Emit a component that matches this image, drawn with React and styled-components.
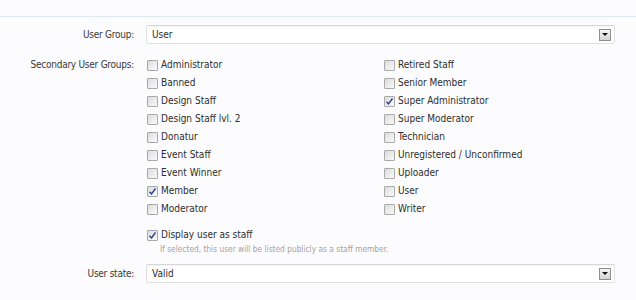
import React from 'react';
import styled, { createGlobalStyle } from 'styled-components';

const GlobalStyle = createGlobalStyle`
  body {
    margin: 0;
    background: #fcfcfe;
    font-family: "DejaVu Sans Condensed", "DejaVu Sans", sans-serif;
    font-size: 10px;
    color: #2d2d2d;
  }
`;

const Page = styled.div`
  width: 636px;
  height: 300px;
  overflow: hidden;
`;

const Intro = styled.div`
  height: 17px;
  border-bottom: 1px solid #dfe9ee;
  box-sizing: border-box;
`;

const Form = styled.div`
  padding-top: 8px;
`;

const Row = styled.div`
  display: grid;
  grid-template-columns: 134px 1fr;
  column-gap: 12px;
  align-items: ${(p) => (p.$top ? 'start' : 'center')};
  margin-bottom: ${(p) => p.$mb || 0}px;
  padding-right: 21px;
`;

const Label = styled.div`
  text-align: right;
  color: #3a3a3a;
  line-height: 18px;
  letter-spacing: -0.25px;
`;

const Select = styled.div`
  height: 19px;
  box-sizing: border-box;
  border: 1px solid #e1e1e1;
  border-top-color: #d6d6d6;
  border-radius: 2px;
  background: #fff;
  box-shadow: inset 0 1px 2px rgba(0, 0, 0, 0.05);
  display: flex;
  align-items: center;
  justify-content: space-between;
  padding: 0 3px 0 5px;
`;

const Arrow = styled.div`
  width: 12px;
  height: 12px;
  box-sizing: border-box;
  border: 1px solid #8e8e8e;
  background: linear-gradient(#f4f4f4, #d4d4d4);
  display: flex;
  align-items: center;
  justify-content: center;
  &::after {
    content: '';
    border-left: 3px solid transparent;
    border-right: 3px solid transparent;
    border-top: 3px solid #111;
  }
`;

const Groups = styled.div`
  display: grid;
  grid-template-columns: 237px 1fr;
  grid-auto-flow: column;
  grid-template-rows: repeat(9, 18px);
`;

const Option = styled.label`
  display: flex;
  align-items: center;
  gap: 3px;
  padding-left: 1px;
  line-height: 18px;
  white-space: nowrap;
`;

const Box = styled.span`
  width: 11px;
  height: 11px;
  box-sizing: border-box;
  border: 1px solid #a9a9a9;
  border-radius: 1px;
  background: linear-gradient(135deg, #dcdcdc, #fafafa);
  display: inline-flex;
  align-items: center;
  justify-content: center;
  flex: none;
`;

const Hint = styled.div`
  font-size: 8.3px;
  color: #a3a3a3;
  padding-left: 14px;
  line-height: 11px;
`;

const Check = ({ on }) => (
  <Box>
    {on && (
      <svg width="9" height="9" viewBox="0 0 9 9">
        <path d="M1.5 4.8 L3.5 7 L7.5 1.5" fill="none" stroke="#2a3f8f" strokeWidth="1.4" />
      </svg>
    )}
  </Box>
);

const groups = [
  ['Administrator', false],
  ['Banned', false],
  ['Design Staff', false],
  ['Design Staff lvl. 2', false],
  ['Donatur', false],
  ['Event Staff', false],
  ['Event Winner', false],
  ['Member', true],
  ['Moderator', false],
  ['Retired Staff', false],
  ['Senior Member', false],
  ['Super Administrator', true],
  ['Super Moderator', false],
  ['Technician', false],
  ['Unregistered / Unconfirmed', false],
  ['Uploader', false],
  ['User', false],
  ['Writer', false],
];

export default function App() {
  return (
    <Page>
      <GlobalStyle />
      <Intro />
      <Form>
        <Row $mb={12}>
          <Label>User Group:</Label>
          <Select>
            <span>User</span>
            <Arrow />
          </Select>
        </Row>
        <Row $top $mb={8}>
          <Label>Secondary User Groups:</Label>
          <Groups>
            {groups.map(([name, on]) => (
              <Option key={name}>
                <Check on={on} />
                {name}
              </Option>
            ))}
          </Groups>
        </Row>
        <Row $top $mb={9}>
          <div />
          <div>
            <Option>
              <Check on />
              Display user as staff
            </Option>
            <Hint>If selected, this user will be listed publicly as a staff member.</Hint>
          </div>
        </Row>
        <Row>
          <Label>User state:</Label>
          <Select>
            <span>Valid</span>
            <Arrow />
          </Select>
        </Row>
      </Form>
    </Page>
  );
}
